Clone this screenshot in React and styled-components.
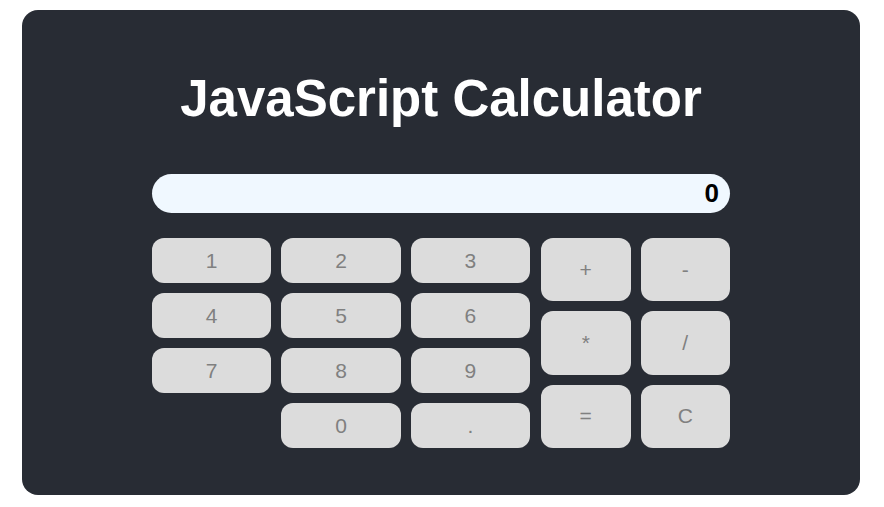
import React, { useState } from 'react';
import styled, { createGlobalStyle } from 'styled-components';

const GlobalStyle = createGlobalStyle`
  body {
    margin: 0;
    background-color: #ffffff;
    font-family: 'Liberation Sans', Arial, sans-serif;
  }
`;

const Card = styled.div`
  margin: 10px 24px 0 22px;
  height: 485px;
  box-sizing: border-box;
  padding-top: 60px;
  background-color: #282c34;
  border-radius: 16px;
  display: flex;
  flex-direction: column;
  align-items: center;
`;

const Title = styled.h1`
  margin: 0;
  color: #ffffff;
  font-size: 51px;
  font-weight: bold;
  line-height: 58px;
`;

const Calculator = styled.div`
  width: 578px;
  margin-top: 46px;
  display: flex;
  flex-direction: column;
  gap: 25px;
`;

const Display = styled.div`
  height: 39px;
  box-sizing: border-box;
  padding: 0 11px;
  border-radius: 20px;
  background-color: #f0f8ff;
  color: #000000;
  font-size: 26px;
  font-weight: bold;
  display: flex;
  align-items: center;
  justify-content: flex-end;
`;

const Keypad = styled.div`
  display: grid;
  grid-template-columns: 378px 189px;
  gap: 11px;
  height: 210px;
`;

const Numbers = styled.div`
  display: grid;
  grid-template-columns: repeat(3, 1fr);
  grid-template-rows: repeat(4, 1fr);
  gap: 10px;
`;

const Operators = styled.div`
  display: grid;
  grid-template-columns: repeat(2, 1fr);
  grid-template-rows: repeat(3, 1fr);
  gap: 10px;
`;

const Key = styled.button`
  grid-column: ${(p) => p.$col || 'auto'};
  border: none;
  border-radius: 12px;
  background-color: #dcdcdc;
  color: #808080;
  font-family: 'Liberation Sans', Arial, sans-serif;
  font-size: 21px;
  padding: 0;
  cursor: pointer;
`;

const numberKeys = ['1', '2', '3', '4', '5', '6', '7', '8', '9'];
const operatorKeys = ['+', '-', '*', '/', '=', 'C'];

const App = () => {
  const [display, setDisplay] = useState('0');

  const handleKey = (key) => {
    if (key === 'C') return setDisplay('0');
    if (key === '=') {
      try {
        // eslint-disable-next-line no-new-func
        setDisplay(String(Function(`return (${display})`)()));
      } catch (e) {
        setDisplay('Error');
      }
      return;
    }
    setDisplay(display === '0' ? key : display + key);
  };

  return (
    <>
      <GlobalStyle />
      <Card>
        <Title>JavaScript Calculator</Title>
        <Calculator>
          <Display>{display}</Display>
          <Keypad>
            <Numbers>
              {numberKeys.map((key) => (
                <Key key={key} onClick={() => handleKey(key)}>
                  {key}
                </Key>
              ))}
              <Key $col="2" onClick={() => handleKey('0')}>
                0
              </Key>
              <Key onClick={() => handleKey('.')}>.</Key>
            </Numbers>
            <Operators>
              {operatorKeys.map((key) => (
                <Key key={key} onClick={() => handleKey(key)}>
                  {key}
                </Key>
              ))}
            </Operators>
          </Keypad>
        </Calculator>
      </Card>
    </>
  );
};

export default App;
